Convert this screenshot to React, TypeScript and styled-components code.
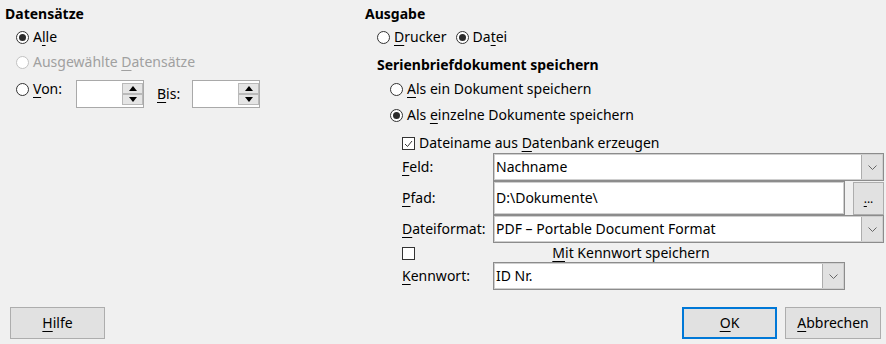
import React from 'react';
import styled, { createGlobalStyle } from 'styled-components';

const GlobalStyle = createGlobalStyle`
  html, body {
    margin: 0;
    padding: 0;
    background: #f0f0f0;
  }
  body {
    font-family: "Noto Sans", "Open Sans", sans-serif;
    font-size: 14px;
    line-height: 20px;
    color: #000;
  }
  * {
    box-sizing: border-box;
  }
`;

const Dialog = styled.div`
  width: 886px;
  height: 344px;
  display: flex;
  flex-direction: column;
  justify-content: space-between;
`;

const Content = styled.div`
  display: grid;
  grid-template-columns: 360px 1fr;
  padding: 4px 2px 0 5px;
`;

const Column = styled.div`
  display: flex;
  flex-direction: column;
`;

const Heading = styled.div<{ $indent?: number; $top?: number }>`
  font-weight: bold;
  height: 20px;
  white-space: nowrap;
  margin-left: ${p => p.$indent ?? 0}px;
  margin-top: ${p => p.$top ?? 0}px;
`;

const Row = styled.div<{ $indent: number; $top: number; $align?: string; $gap?: number }>`
  display: flex;
  align-items: ${p => p.$align ?? 'center'};
  gap: ${p => p.$gap ?? 9}px;
  min-height: 20px;
  white-space: nowrap;
  margin-left: ${p => p.$indent}px;
  margin-top: ${p => p.$top}px;
`;

const Option = styled.label<{ $disabled?: boolean; $width?: number }>`
  display: flex;
  align-items: center;
  gap: 4px;
  height: 20px;
  color: ${p => (p.$disabled ? '#a0a0a0' : '#000')};
  width: ${p => (p.$width ? `${p.$width}px` : 'auto')};
  flex: none;
`;

const Circle = styled.span<{ $checked?: boolean; $disabled?: boolean }>`
  width: 13px;
  height: 13px;
  margin-top: 1px;
  border-radius: 50%;
  border: 1px solid ${p => (p.$disabled ? '#c2c2c2' : '#333')};
  background: #fff;
  flex: none;
  display: inline-flex;
  align-items: center;
  justify-content: center;

  &::after {
    content: '';
    width: 7px;
    height: 7px;
    border-radius: 50%;
    background: #2b2b2b;
    display: ${p => (p.$checked ? 'block' : 'none')};
  }
`;

const Box = styled.span`
  width: 13px;
  height: 13px;
  margin-top: 1px;
  border: 1px solid #333;
  background: #fff;
  flex: none;
  display: inline-flex;
  align-items: center;
  justify-content: center;
`;

const Key = styled.u`
  text-decoration: underline;
  text-underline-offset: 3px;
  text-decoration-thickness: 1px;
`;

const SpinGroup = styled.div`
  display: flex;
  align-items: center;
  margin-top: 1px;
`;

const SpinBox = styled.div`
  width: 68px;
  height: 28px;
  border: 1px solid #a9a9a9;
  background: #fff;
  display: flex;
  justify-content: flex-end;
  padding: 2px 0 2px 0;
`;

const SpinButtons = styled.div`
  width: 21px;
  display: flex;
  flex-direction: column;
`;

const SpinButton = styled.div`
  flex: 1;
  background: #e5e5e5;
  border: 1px solid #b9b9b9;
  display: flex;
  align-items: center;
  justify-content: center;
`;

const SideLabel = styled.span`
  width: 35px;
  margin-left: 13px;
`;

const Form = styled.div`
  display: grid;
  grid-template-columns: 91px 352px 8px 31px;
  grid-template-rows: 28px 34px 28px 19px 28px;
  margin-left: 37px;
`;

const FieldLabel = styled.div`
  grid-column: 1;
  align-self: center;
  white-space: nowrap;
`;

const Field = styled.div<{ $span?: string }>`
  grid-column: ${p => p.$span ?? 'auto'};
  background: #fff;
  border: 1px solid #8c8c8c;
  box-shadow: inset 0 0 0 1px #cfcfcf;
  display: flex;
  align-items: center;
  padding-left: 2px;
  white-space: nowrap;
  overflow: hidden;
`;

const FieldText = styled.span`
  flex: 1;
`;

const DropButton = styled.div`
  width: 21px;
  align-self: stretch;
  margin: 1px;
  background: #e1e1e1;
  border-left: 1px solid #adadad;
  display: flex;
  align-items: center;
  justify-content: center;
`;

const BrowseButton = styled.div`
  grid-column: 4;
  margin-top: 1px;
  background: #e1e1e1;
  border: 1px solid #adadad;
  display: flex;
  align-items: center;
  justify-content: center;
  font-size: 12px;
`;

const PasswordRow = styled.div`
  grid-column: 1 / 3;
  display: flex;
  align-items: center;
`;

const CenteredText = styled.span`
  flex: 1;
  margin-left: 2px;
  text-align: center;
`;

const Footer = styled.div`
  display: flex;
  align-items: center;
  gap: 8px;
  padding: 0 5px 5px 10px;
`;

const Button = styled.div<{ $primary?: boolean; $width: number }>`
  width: ${p => p.$width}px;
  height: 32px;
  background: #e1e1e1;
  border: ${p => (p.$primary ? '2px solid #0078d7' : '1px solid #adadad')};
  display: flex;
  align-items: center;
  justify-content: center;
`;

const Spacer = styled.div`
  flex: 1;
`;

const Chevron = () => (
  <svg width="9" height="5" viewBox="0 0 9 5">
    <polyline points="0.5,0.5 4.5,4.5 8.5,0.5" fill="none" stroke="#666" strokeWidth="1" />
  </svg>
);

const Tick = () => (
  <svg width="9" height="8" viewBox="0 0 9 8">
    <polyline points="1,4 3.5,6.5 8,1" fill="none" stroke="#333" strokeWidth="1" />
  </svg>
);

const Spin = () => (
  <SpinBox>
    <SpinButtons>
      <SpinButton>
        <svg width="8" height="5" viewBox="0 0 8 5">
          <polygon points="4,0 8,5 0,5" fill="#000" />
        </svg>
      </SpinButton>
      <SpinButton>
        <svg width="8" height="5" viewBox="0 0 8 5">
          <polygon points="0,0 8,0 4,5" fill="#000" />
        </svg>
      </SpinButton>
    </SpinButtons>
  </SpinBox>
);

const Combo = ({ text, span }: { text: string; span?: string }) => (
  <Field $span={span}>
    <FieldText>{text}</FieldText>
    <DropButton>
      <Chevron />
    </DropButton>
  </Field>
);

const App: React.FC = () => {
  return (
    <Dialog>
      <GlobalStyle />
      <Content>
        <Column>
          <Heading>Datensätze</Heading>
          <Row $indent={11} $top={3}>
            <Option>
              <Circle $checked />
              <span>A<Key>l</Key>le</span>
            </Option>
          </Row>
          <Row $indent={11} $top={5}>
            <Option $disabled>
              <Circle $disabled />
              <span>Ausgewählte <Key>D</Key>atensätze</span>
            </Option>
          </Row>
          <Row $indent={11} $top={7} $align="flex-start" $gap={0}>
            <Option $width={60}>
              <Circle />
              <span><Key>V</Key>on:</span>
            </Option>
            <SpinGroup>
              <Spin />
              <SideLabel><Key>B</Key>is:</SideLabel>
              <Spin />
            </SpinGroup>
          </Row>
        </Column>

        <Column>
          <Heading>Ausgabe</Heading>
          <Row $indent={12} $top={3}>
            <Option>
              <Circle />
              <span><Key>D</Key>rucker</span>
            </Option>
            <Option>
              <Circle $checked />
              <span>Da<Key>t</Key>ei</span>
            </Option>
          </Row>
          <Heading $indent={12} $top={8}>Serienbriefdokument speichern</Heading>
          <Row $indent={25} $top={4}>
            <Option>
              <Circle />
              <span><Key>A</Key>ls ein Dokument speichern</span>
            </Option>
          </Row>
          <Row $indent={25} $top={6}>
            <Option>
              <Circle $checked />
              <span>Als <Key>e</Key>inzelne Dokumente speichern</span>
            </Option>
          </Row>
          <Row $indent={37} $top={8}>
            <Option>
              <Box>
                <Tick />
              </Box>
              <span>Dateiname aus <Key>D</Key>atenbank erzeugen</span>
            </Option>
          </Row>
          <Form>
            <FieldLabel><Key>F</Key>eld:</FieldLabel>
            <Combo text="Nachname" span="2 / 5" />

            <FieldLabel><Key>P</Key>fad:</FieldLabel>
            <Field>
              <FieldText>D:\Dokumente\</FieldText>
            </Field>
            <BrowseButton>
              <span><Key>.</Key>..</span>
            </BrowseButton>

            <FieldLabel><Key>D</Key>ateiformat:</FieldLabel>
            <Combo text="PDF – Portable Document Format" span="2 / 5" />

            <PasswordRow>
              <Box />
              <CenteredText><Key>M</Key>it Kennwort speichern</CenteredText>
            </PasswordRow>

            <FieldLabel><Key>K</Key>ennwort:</FieldLabel>
            <Combo text="ID Nr." span="2" />
          </Form>
        </Column>
      </Content>

      <Footer>
        <Button $width={95}><span><Key>H</Key>ilfe</span></Button>
        <Spacer />
        <Button $width={95} $primary><span><Key>O</Key>K</span></Button>
        <Button $width={96}><span><Key>A</Key>bbrechen</span></Button>
      </Footer>
    </Dialog>
  );
};

export default App;
